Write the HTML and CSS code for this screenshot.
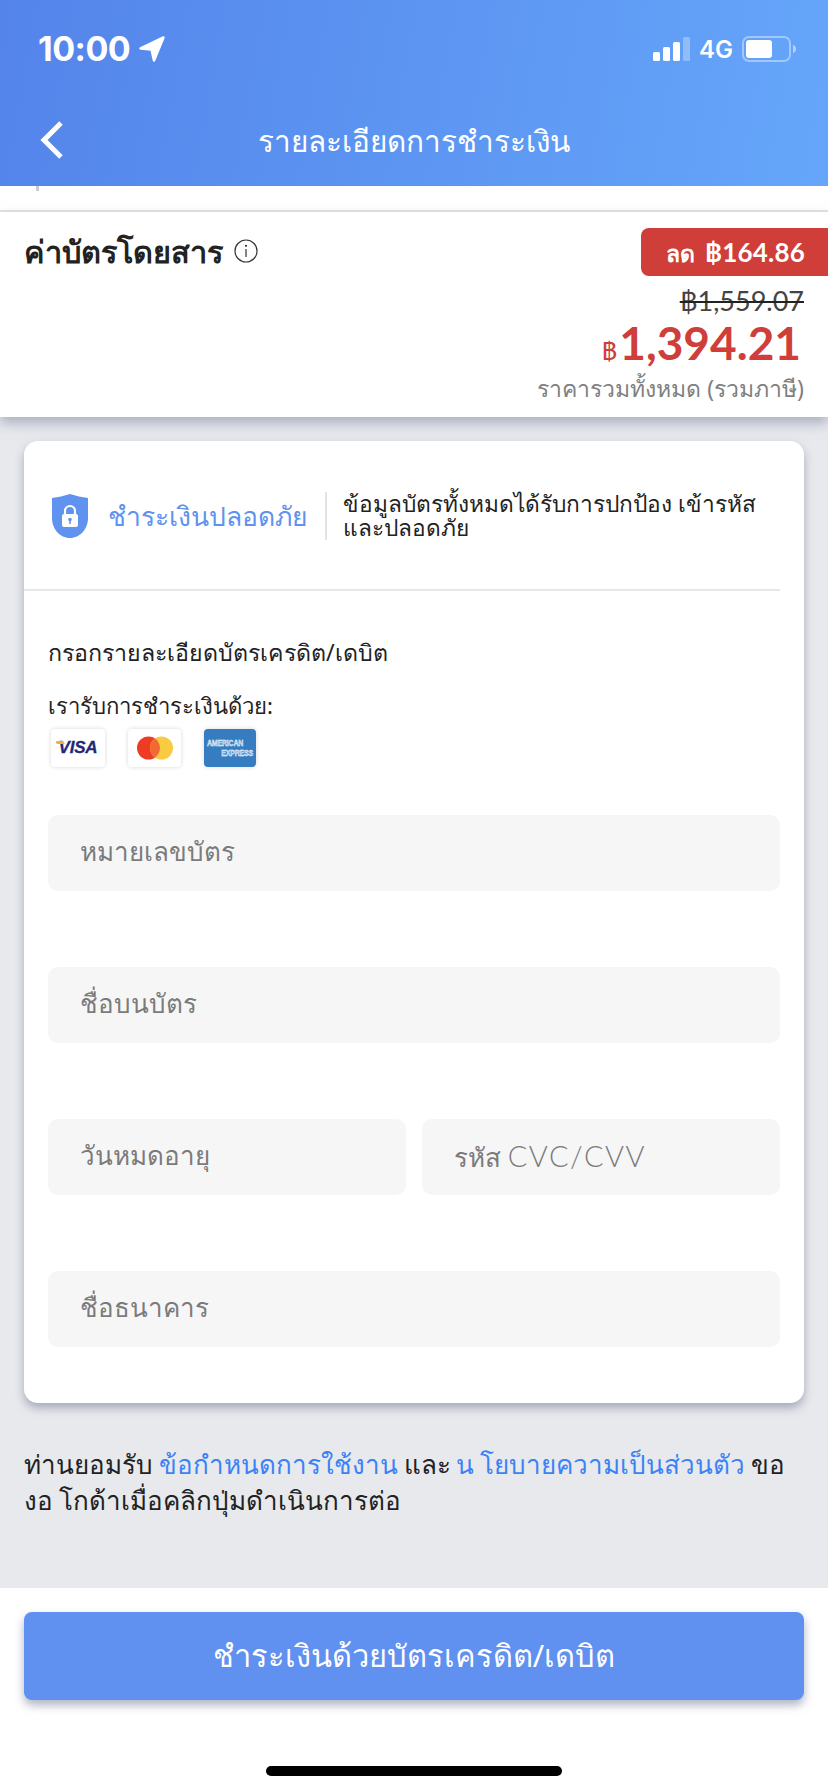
FILE: index.html
```html
<!DOCTYPE html>
<html lang="th">
<head>
    <meta charset="UTF-8">
    <meta name="viewport" content="width=device-width, initial-scale=1.0">
    <title>รายละเอียดการชำระเงิน</title>
    <link rel="stylesheet" href="styles.css">
</head>
<body>
    <header class="app-header">
        <div class="status-bar">
            <div class="status-left">
                <span class="clock">10:00</span>
                <svg class="location-icon" width="26" height="26" viewBox="0 0 26 26"><path d="M24.500 1.500 15 24.500 12.500 13.500 1.500 12.500Z" fill="#fff" stroke="#fff" stroke-width="2.500" stroke-linejoin="round"/></svg>
            </div>
            <div class="status-right">
                <svg width="37" height="24" viewBox="0 0 37 24">
                    <rect x="0" y="15" width="7" height="9" rx="1.5" fill="#fff"/>
                    <rect x="10" y="10" width="7" height="14" rx="1.5" fill="#fff"/>
                    <rect x="20" y="5" width="7" height="19" rx="1.5" fill="#fff"/>
                    <rect x="30" y="0" width="7" height="24" rx="1.5" fill="#fff" opacity=".3"/>
                </svg>
                <span class="network">4G</span>
                <svg width="54" height="26" viewBox="0 0 54 26">
                    <rect x="1" y="1" width="47" height="24" rx="6" fill="none" stroke="#fff" stroke-opacity=".4" stroke-width="2"/>
                    <rect x="4" y="4" width="26" height="18" rx="3" fill="#fff"/>
                    <path d="M51 9c2 .6 3 2 3 4s-1 3.400-3 4z" fill="#fff" opacity=".5"/>
                </svg>
            </div>
        </div>
        <div class="nav-bar">
            <svg class="back-icon" width="24" height="40" viewBox="0 0 24 40"><path d="M21 3 4 20l17 17" fill="none" stroke="#fff" stroke-width="5"/></svg>
            <h1 class="nav-title">รายละเอียดการชำระเงิน</h1>
        </div>
    </header>

    <div class="top-strip"><span class="scroll-mark"></span></div>

    <section class="fare">
        <div class="fare-row">
            <div class="fare-title">
                <span>ค่าบัตรโดยสาร</span>
                <svg width="24" height="24" viewBox="0 0 24 24"><circle cx="12" cy="12" r="11" fill="none" stroke="#333" stroke-width="1.2"/><circle cx="12" cy="6.800" r="1.100" fill="#333"/><path d="M12 10v8" stroke="#333" stroke-width="1.200"/></svg>
            </div>
            <div class="discount"><span class="discount-label">ลด</span> ฿164.86</div>
        </div>
        <div class="old-price">฿1,559.07</div>
        <div class="total"><span class="currency">฿</span>1,394.21</div>
        <div class="total-note">ราคารวมทั้งหมด (รวมภาษี)</div>
    </section>

    <main class="content">
        <form class="card">
            <div class="secure">
                <svg width="36" height="44" viewBox="0 0 36 44">
                    <path d="M0 4C6 3 12 2 18 0c6 2 12 3 18 4v20c0 11-8 20-18 20S0 35 0 24Z" fill="#6092f0"/>
                    <path d="M13 21v-4a5 5 0 0 1 10 0v4" fill="none" stroke="#fff" stroke-width="2.200"/>
                    <rect x="10" y="20" width="16" height="13" rx="2" fill="#fff"/>
                    <circle cx="18" cy="25.500" r="1.800" fill="#6092f0"/>
                    <rect x="17.200" y="26" width="1.600" height="4" fill="#6092f0"/>
                </svg>
                <span class="secure-label">ชำระเงินปลอดภัย</span>
                <p class="secure-text">ข้อมูลบัตรทั้งหมดได้รับการปกป้อง เข้ารหัส<br>และปลอดภัย</p>
            </div>

            <p class="card-heading">กรอกรายละเอียดบัตรเครดิต/เดบิต</p>
            <p class="card-accept">เรารับการชำระเงินด้วย:</p>
            <div class="logos">
                <span class="logo">
                    <span class="visa">VISA</span>
                </span>
                <span class="logo logo-mc">
                    <svg width="36" height="24" viewBox="0 0 36 24">
                        <circle cx="11.500" cy="12" r="11.500" fill="#ee3b24"/>
                        <circle cx="24.500" cy="12" r="11.500" fill="#f9cb42"/>
                        <path d="M18 2.500a11.500 11.500 0 0 1 0 19 11.500 11.500 0 0 1 0-19Z" fill="#f26a33"/>
                    </svg>
                </span>
                <span class="logo logo-amex">
                    <span class="amex">AMERICAN<span class="amex-second">EXPRESS</span></span>
                </span>
            </div>

            <div class="field">หมายเลขบัตร</div>
            <div class="field">ชื่อบนบัตร</div>
            <div class="field-pair">
                <div class="field">วันหมดอายุ</div>
                <div class="field">รหัส <span class="field-latin">CVC/CVV</span></div>
            </div>
            <div class="field">ชื่อธนาคาร</div>
        </form>

        <p class="terms">ท่านยอมรับ <a href="#">ข้อกำหนดการใช้งาน</a> และ <a href="#">น โยบายความเป็นส่วนตัว</a> ขอ<br>งอ โกด้าเมื่อคลิกปุ่มดำเนินการต่อ</p>
    </main>

    <footer class="pay-bar">
        <button type="button" class="pay-button">ชำระเงินด้วยบัตรเครดิต/เดบิต</button>
        <div class="home-bar"></div>
    </footer>
</body>
</html>
```

FILE: styles.css
```css
* {
    box-sizing: border-box;
}

html, body {
    margin: 0;
    padding: 0;
}

body {
    width: 828px;
    height: 1792px;
    overflow: hidden;
    display: flex;
    flex-direction: column;
    font-family: 'Noto Sans', 'Roboto', 'DejaVu Sans', sans-serif;
    background-color: #fff;
    color: #222;
}

p {
    margin: 0;
}

.app-header {
    height: 186px;
    flex: none;
    background: linear-gradient(100deg, #5484ea 0%, #65a6fa 100%);
    color: #fff;
}

.status-bar {
    height: 98px;
    padding: 30px 32px 0 38px;
    display: flex;
    justify-content: space-between;
    align-items: flex-start;
}

.status-left {
    display: flex;
    align-items: center;
    gap: 9px;
}

.clock {
    font-family: 'Inter', sans-serif;
    font-size: 34px;
    line-height: 38px;
    font-weight: 700;
    letter-spacing: -0.5px;
}

.status-right {
    display: flex;
    align-items: center;
    gap: 9px;
    height: 38px;
}

.network {
    font-family: 'Inter', sans-serif;
    font-size: 24px;
    font-weight: 600;
}

.nav-bar {
    position: relative;
    height: 88px;
    display: flex;
    align-items: center;
    justify-content: center;
}

.back-icon {
    position: absolute;
    left: 40px;
    top: 22px;
}

.nav-title {
    margin: 0 0 2px;
    font-size: 29.700px;
    font-weight: 400;
    line-height: 86px;
}

.top-strip {
    position: relative;
    height: 26px;
    flex: none;
    background: #fff;
    border-bottom: 2px solid #e2e3e8;
}

.scroll-mark {
    position: absolute;
    left: 36px;
    top: 0;
    width: 3px;
    height: 5px;
    background: #c9ccd3;
}

.fare {
    position: relative;
    height: 205px;
    flex: none;
    background: #fff;
    padding: 16px 24px 0;
    box-shadow: 0 6px 12px rgba(120, 128, 155, 0.55);
    text-align: right;
}

.fare-row {
    display: flex;
    justify-content: space-between;
    align-items: flex-start;
    margin-right: -24px;
}

.fare-title {
    display: flex;
    align-items: center;
    gap: 11px;
    padding-top: 3px;
    font-size: 30.700px;
    font-weight: 700;
    line-height: 40px;
    color: #222;
}

.discount {
    width: 187px;
    height: 48px;
    padding-left: 2px;
    background: #cf3e38;
    color: #fff;
    border-radius: 8px 0 0 8px;
    font-family: 'Lato', 'DejaVu Sans', sans-serif;
    font-size: 26px;
    font-weight: 700;
    line-height: 48px;
    letter-spacing: 0.2px;
    text-align: center;
}

.discount-label {
    font-family: 'Noto Sans', sans-serif;
    font-size: 23px;
    letter-spacing: 0;
    margin-right: 3px;
}

.old-price {
    margin-top: 10px;
    font-family: 'Lato', 'DejaVu Sans', sans-serif;
    font-size: 27px;
    line-height: 30px;
    color: #444;
    text-decoration: line-through;
    text-decoration-color: #222;
}

.total {
    margin: 8px 3px 0 0;
    font-family: 'Lato', 'DejaVu Sans', sans-serif;
    font-size: 46px;
    font-weight: 700;
    line-height: 38px;
    color: #cf3e38;
}

.currency {
    font-family: 'Roboto', sans-serif;
    font-size: 25px;
    font-weight: 400;
    margin-right: 2px;
}

.total-note {
    font-size: 23px;
    line-height: 34px;
    color: #808080;
}

.content {
    flex: 1;
    background-color: #e8e9ed;
    padding: 24px 24px 0;
}

.card {
    height: 962px;
    background: #fff;
    border-radius: 14px;
    padding: 0 24px;
    box-shadow: 0 5px 10px rgba(120, 128, 155, 0.6);
}

.secure {
    height: 150px;
    display: flex;
    align-items: center;
    border-bottom: 2px solid #e6e7eb;
    margin-left: -24px;
    padding: 2px 0 0 28px;
}

.secure-label {
    margin-left: 20px;
    padding-right: 17px;
    border-right: 2px solid #e2e3e8;
    font-size: 26.500px;
    line-height: 48px;
    color: #6092f0;
    white-space: nowrap;
}

.secure-text {
    margin-left: 16px;
    font-size: 22.700px;
    line-height: 24px;
    color: #222;
    white-space: nowrap;
}

.card-heading {
    margin-top: 45px;
    font-size: 23.200px;
    line-height: 32px;
}

.card-accept {
    margin-top: 21px;
    font-size: 22.100px;
    line-height: 32px;
}

.logos {
    display: flex;
    gap: 23px;
    margin-top: 8px;
    padding-left: 3px;
}

.logo {
    position: relative;
    width: 54px;
    height: 38px;
    display: flex;
    align-items: center;
    justify-content: center;
    background: #fff;
    border-radius: 4px;
    box-shadow: 0 0 4px rgba(0, 0, 0, 0.16);
}

.logo-mc {
    width: 53px;
}

.visa {
    font-family: 'Liberation Sans', sans-serif;
    font-size: 17px;
    font-weight: 700;
    font-style: italic;
    letter-spacing: -0.2px;
    color: #1f2a75;
    -webkit-text-stroke: 0.3px #1f2a75;
}

.visa::before {
    content: "";
    position: absolute;
    left: 5px;
    top: 12px;
    width: 8px;
    height: 3px;
    background: #f0b03a;
    border-radius: 2px 0 0 0;
    transform: skewX(30deg);
}

.logo-amex {
    width: 52px;
    background: #367cc0;
}

.amex {
    display: block;
    width: 46px;
    font-family: 'Liberation Sans', sans-serif;
    font-size: 7px;
    font-weight: 700;
    line-height: 8px;
    letter-spacing: -0.2px;
    color: #9cc0e2;
    -webkit-text-stroke: 0.3px #fff;
    transform: scaleY(1.25);
}

.amex-second {
    display: block;
    text-align: right;
}

.field {
    height: 76px;
    background: #f6f6f7;
    border-radius: 10px;
    padding-left: 32px;
    font-size: 26px;
    line-height: 73px;
    color: #7b7b7b;
    margin-top: 76px;
}

.logos + .field {
    margin-top: 48px;
}

.field-latin {
    font-family: 'Lato', sans-serif;
    font-size: 29px;
    font-weight: 300;
    letter-spacing: 1.500px;
}

.field-pair {
    display: grid;
    grid-template-columns: 1fr 1fr;
    gap: 16px;
}

.terms {
    margin-top: 43px;
    font-size: 26px;
    line-height: 36px;
    word-spacing: -1px;
    color: #222;
}

.terms a {
    color: #3b82f6;
    text-decoration: none;
}

.pay-bar {
    position: relative;
    height: 204px;
    flex: none;
    background: #fff;
    padding: 24px 24px 0;
}

.pay-button {
    display: block;
    width: 100%;
    height: 88px;
    border: 0;
    border-radius: 8px;
    background: #6090f0;
    color: #fff;
    font-family: inherit;
    font-size: 30.800px;
    box-shadow: 0 5px 10px rgba(120, 128, 155, 0.6);
}

.home-bar {
    width: 296px;
    height: 10px;
    margin: 66px auto 0;
    border-radius: 5px;
    background: #000;
}
```
